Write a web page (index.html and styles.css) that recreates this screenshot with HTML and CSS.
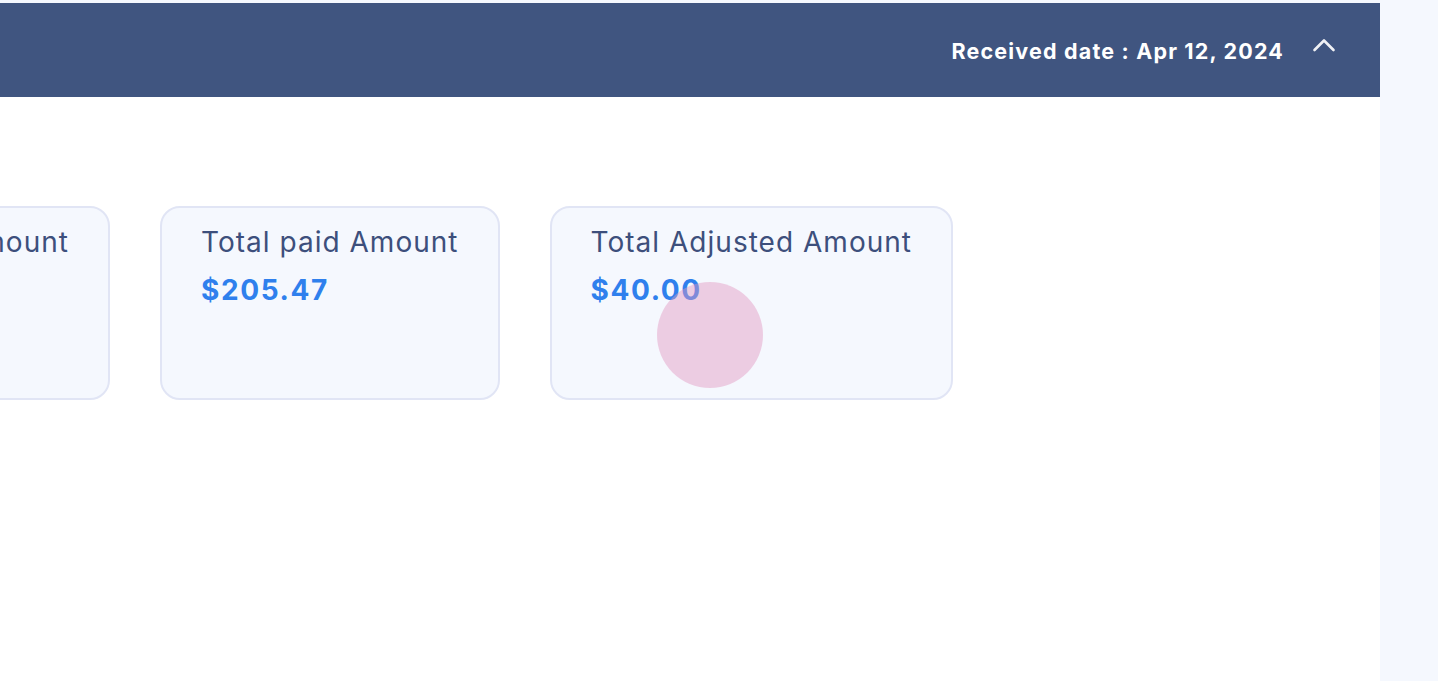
FILE: index.html
```html
<!DOCTYPE html>
<html lang="en">
<head>
<meta charset="utf-8">
<title>Payment summary</title>
<link rel="stylesheet" href="styles.css">
</head>
<body>
<div class="page">
  <div class="content">
    <header class="bar">
      <span class="received">Received date : Apr 12, 2024</span>
      <button class="toggle" aria-label="Collapse">
        <svg width="24" height="20" viewBox="0 0 24 20"><path d="M2.5 16 L12 6.5 L21.5 16" fill="none" stroke="#ffffff" stroke-width="2.6" stroke-linecap="round" stroke-linejoin="round" opacity="0.92"/></svg>
      </button>
    </header>
    <main class="main">
      <div class="cards">
        <div class="card card-first">
          <div class="card-title">Total Billed Amount</div>
          <div class="card-value">$245.47</div>
        </div>
        <div class="card">
          <div class="card-title">Total paid Amount</div>
          <div class="card-value">$205.47</div>
        </div>
        <div class="card">
          <div class="card-title">Total Adjusted Amount</div>
          <div class="card-value">$40.00</div>
          <span class="tap"></span>
        </div>
      </div>
    </main>
  </div>
  <aside class="side"></aside>
</div>
</body>
</html>
```
FILE: styles.css
```css
html, body {
  margin: 0;
  padding: 0;
}
body {
  background: #f5f8fe;
  font-family: "Inter", "DejaVu Sans", sans-serif;
  height: 681px;
  overflow: hidden;
}
.page {
  display: grid;
  grid-template-columns: 1380px 58px;
  height: 681px;
}
.content {
  padding-top: 3px;
  display: flex;
  flex-direction: column;
  overflow: hidden;
}
.bar {
  box-sizing: border-box;
  height: 94px;
  padding: 2px 44px 0 0;
  background: #405580;
  display: flex;
  align-items: center;
  justify-content: flex-end;
  gap: 28px;
  flex-shrink: 0;
}
.received {
  color: #ffffff;
  font-weight: 700;
  font-size: 21.5px;
  letter-spacing: 1.18px;
  white-space: nowrap;
}
.toggle {
  background: none;
  border: 0;
  padding: 0;
  display: flex;
  margin-top: -14px;
  cursor: pointer;
}
.main {
  flex: 1;
  background: #ffffff;
  padding-top: 109px;
}
.cards {
  display: grid;
  grid-template-columns: 110px auto auto;
  justify-content: start;
  column-gap: 50px;
}
.card {
  box-sizing: border-box;
  height: 194px;
  padding: 17px 39px 0 39px;
  border: 2px solid #e1e5f5;
  border-radius: 20px;
  background: #f5f8fe;
  position: relative;
}
.card-first {
  justify-self: end;
}
.card-title {
  color: #3d4f7c;
  font-size: 28px;
  line-height: 34px;
  letter-spacing: 1.02px;
  white-space: nowrap;
}
.card-value {
  color: #2f80ed;
  font-size: 28px;
  font-weight: 700;
  line-height: 34px;
  letter-spacing: 1.6px;
  margin-top: 14px;
  white-space: nowrap;
}
.tap {
  position: absolute;
  left: 105px;
  top: 74px;
  width: 106px;
  height: 106px;
  border-radius: 50%;
  background: rgba(226, 150, 192, 0.45);
}
```
